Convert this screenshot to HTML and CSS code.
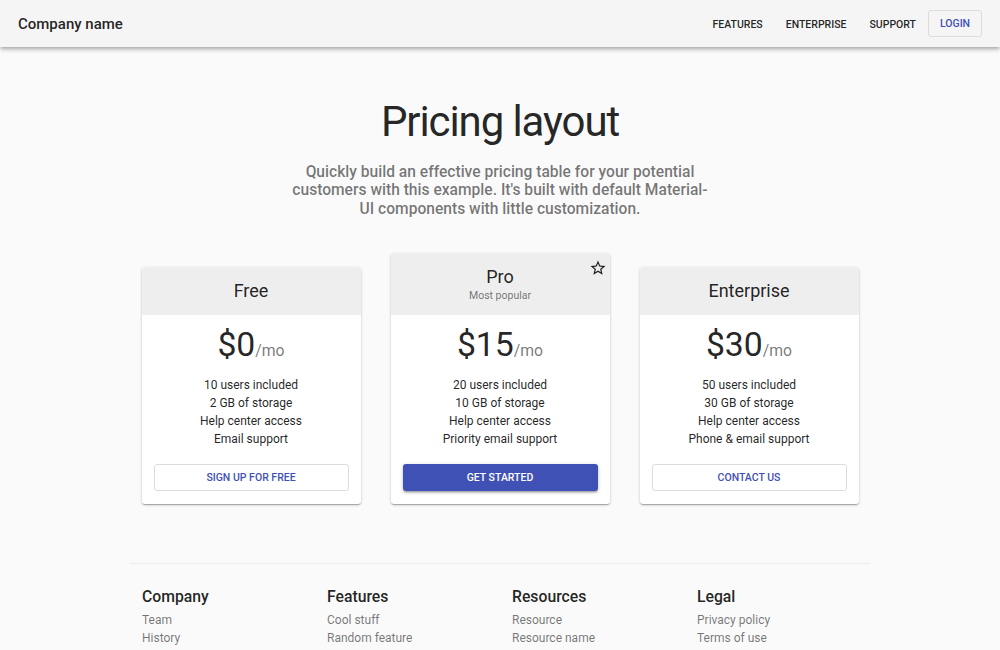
FILE: index.html
```html
<!DOCTYPE html>
<html lang="en">
<head>
<meta charset="utf-8">
<title>Pricing layout</title>
<link rel="stylesheet" href="styles.css">
</head>
<body>
<header class="appbar">
  <div class="brand">Company name</div>
  <nav class="nav">
    <a class="nav-link">Features</a>
    <a class="nav-link">Enterprise</a>
    <a class="nav-link nav-last">Support</a>
    <a class="login">Login</a>
  </nav>
</header>

<main>
  <section class="hero">
    <h1 class="hero-title">Pricing layout</h1>
    <p class="hero-sub">Quickly build an effective pricing table for your potential customers with this example. It's built with default Material-UI components with little customization.</p>
  </section>

  <section class="tiers">
    <div class="card">
      <div class="card-header">
        <div class="card-title">Free</div>
      </div>
      <div class="card-content">
        <div class="pricing"><span class="amount">$0</span><span class="per">/mo</span></div>
        <ul class="features">
          <li>10 users included</li>
          <li>2 GB of storage</li>
          <li>Help center access</li>
          <li>Email support</li>
        </ul>
      </div>
      <div class="card-actions"><button class="btn btn-outlined">Sign up for free</button></div>
    </div>

    <div class="card">
      <div class="card-header">
        <div class="card-title">Pro</div>
        <div class="card-sub">Most popular</div>
        <svg class="star" viewBox="0 0 24 24" width="18" height="18"><path d="M22 9.24l-7.19-.62L12 2 9.19 8.630 2 9.24l5.46 4.73L5.82 21 12 17.27 18.180 21l-1.63-7.03L22 9.24zM12 15.4l-3.760 2.270 1-4.280-3.320-2.880 4.380-.380L12 6.100l1.710 4.040 4.380.380-3.320 2.880 1 4.280L12 15.400z"/></svg>
      </div>
      <div class="card-content">
        <div class="pricing"><span class="amount">$15</span><span class="per">/mo</span></div>
        <ul class="features">
          <li>20 users included</li>
          <li>10 GB of storage</li>
          <li>Help center access</li>
          <li>Priority email support</li>
        </ul>
      </div>
      <div class="card-actions"><button class="btn btn-contained">Get started</button></div>
    </div>

    <div class="card">
      <div class="card-header">
        <div class="card-title">Enterprise</div>
      </div>
      <div class="card-content">
        <div class="pricing"><span class="amount">$30</span><span class="per">/mo</span></div>
        <ul class="features">
          <li>50 users included</li>
          <li>30 GB of storage</li>
          <li>Help center access</li>
          <li>Phone &amp; email support</li>
        </ul>
      </div>
      <div class="card-actions"><button class="btn btn-outlined">Contact us</button></div>
    </div>
  </section>
</main>

<footer class="footer">
  <div class="footer-col">
    <h6 class="footer-title">Company</h6>
    <ul class="footer-links"><li>Team</li><li>History</li><li>Contact us</li><li>Locations</li></ul>
  </div>
  <div class="footer-col">
    <h6 class="footer-title">Features</h6>
    <ul class="footer-links"><li>Cool stuff</li><li>Random feature</li><li>Team feature</li><li>Developer stuff</li><li>Another one</li></ul>
  </div>
  <div class="footer-col">
    <h6 class="footer-title">Resources</h6>
    <ul class="footer-links"><li>Resource</li><li>Resource name</li><li>Another resource</li><li>Final resource</li></ul>
  </div>
  <div class="footer-col">
    <h6 class="footer-title">Legal</h6>
    <ul class="footer-links"><li>Privacy policy</li><li>Terms of use</li></ul>
  </div>
</footer>
</body>
</html>
```

FILE: styles.css
```css
* { box-sizing: border-box; }

html, body {
  margin: 0;
  padding: 0;
}

body {
  background: #fafafa;
  font-family: Roboto, "Liberation Sans", Arial, sans-serif;
  color: rgba(0, 0, 0, 0.87);
}

/* App bar */
.appbar {
  height: 47px;
  background: #f5f5f5;
  display: flex;
  align-items: center;
  padding: 0 18px;
  position: relative;
  z-index: 2;
  box-shadow: 0 1.5px 3px -0.75px rgba(0,0,0,0.2), 0 3px 4px 0 rgba(0,0,0,0.14), 0 0.75px 7.5px 0 rgba(0,0,0,0.12);
}

.brand {
  flex: 1;
  font-size: 15px;
  font-weight: 500;
  line-height: 1.2;
  color: rgba(0, 0, 0, 0.87);
}

.nav {
  display: flex;
  align-items: center;
}

.nav-link {
  font-size: 10.5px;
  font-weight: 500;
  text-transform: uppercase;
  color: rgba(0, 0, 0, 0.87);
  padding: 5px 6px 4px;
  margin-right: 11px;
  cursor: pointer;
}

.nav-link.nav-last {
  margin-right: 6px;
}

.login {
  display: inline-flex;
  align-items: center;
  justify-content: center;
  height: 27px;
  width: 54px;
  border: 1px solid #dcdcdc;
  border-radius: 3px;
  font-size: 10.5px;
  font-weight: 500;
  text-transform: uppercase;
  color: #3f51b5;
  cursor: pointer;
}

/* Hero */
.hero {
  max-width: 452px;
  margin: 0 auto;
  padding: 48px 16px 35px;
  text-align: center;
}

.hero-title {
  margin: 0 0 14px;
  font-size: 42px;
  font-weight: 400;
  line-height: 54px;
  letter-spacing: -0.026em;
  color: rgba(0, 0, 0, 0.87);
}

.hero-sub {
  margin: 0;
  font-size: 15.6px;
  font-weight: 500;
  line-height: 18.4px;
  color: rgba(0, 0, 0, 0.54);
}

/* Tiers */
.tiers {
  width: 717px;
  margin: 0 auto;
  display: flex;
  align-items: flex-end;
  gap: 30px;
}

.card {
  flex: 1;
  background: #fff;
  border-radius: 3px;
  overflow: hidden;
  box-shadow: 0 1px 3px 0 rgba(0,0,0,0.2), 0 1px 1px 0 rgba(0,0,0,0.14), 0 2px 1px -1px rgba(0,0,0,0.12);
}

.card-header {
  position: relative;
  background: #eeeeee;
  padding: 12px;
  text-align: center;
}

.card-title {
  font-size: 18px;
  line-height: 24px;
  font-weight: 400;
  color: rgba(0, 0, 0, 0.87);
}

.card-sub {
  font-size: 10.5px;
  line-height: 14px;
  color: rgba(0, 0, 0, 0.54);
}

.star {
  position: absolute;
  top: 6px;
  right: 3px;
  fill: rgba(0, 0, 0, 0.87);
}

.card-content {
  padding: 12px 12px 10px;
}

.pricing {
  display: flex;
  justify-content: center;
  align-items: baseline;
  height: 36px;
  margin-bottom: 13px;
}

.amount {
  font-size: 33.75px;
  line-height: 36px;
  font-weight: 400;
  color: rgba(0, 0, 0, 0.87);
}

.per {
  font-size: 15.75px;
  font-weight: 400;
  color: rgba(0, 0, 0, 0.54);
}

.features {
  list-style: none;
  margin: 0;
  padding: 0;
  text-align: center;
}

.features li {
  font-size: 12px;
  line-height: 18px;
  color: rgba(0, 0, 0, 0.87);
}

.card-actions {
  padding: 6px 12px 13px;
}

.btn {
  display: block;
  width: 100%;
  height: 27px;
  border-radius: 3px;
  font-family: Roboto, "Liberation Sans", Arial, sans-serif;
  font-size: 10.5px;
  font-weight: 500;
  text-transform: uppercase;
  cursor: pointer;
}

.btn-outlined {
  background: transparent;
  border: 1px solid #dcdcdc;
  color: #3f51b5;
}

.btn-contained {
  background: #3f51b5;
  border: none;
  color: #fff;
  box-shadow: 0 1px 4px 0 rgba(0,0,0,0.2), 0 1.5px 1.5px 0 rgba(0,0,0,0.14), 0 2px 1px -1px rgba(0,0,0,0.12);
}

/* Footer */
.footer {
  width: 740px;
  margin: 59px auto 0;
  border-top: 1px solid #ececec;
  padding: 24px 0 36px 12px;
  display: grid;
  grid-template-columns: repeat(4, 185px);
}

.footer-title {
  margin: 0 0 4px;
  font-size: 15.75px;
  font-weight: 500;
  line-height: 18.4px;
  color: rgba(0, 0, 0, 0.87);
}

.footer-links {
  list-style: none;
  margin: 0;
  padding: 0;
}

.footer-links li {
  font-size: 12px;
  line-height: 18px;
  color: rgba(0, 0, 0, 0.54);
}
```
